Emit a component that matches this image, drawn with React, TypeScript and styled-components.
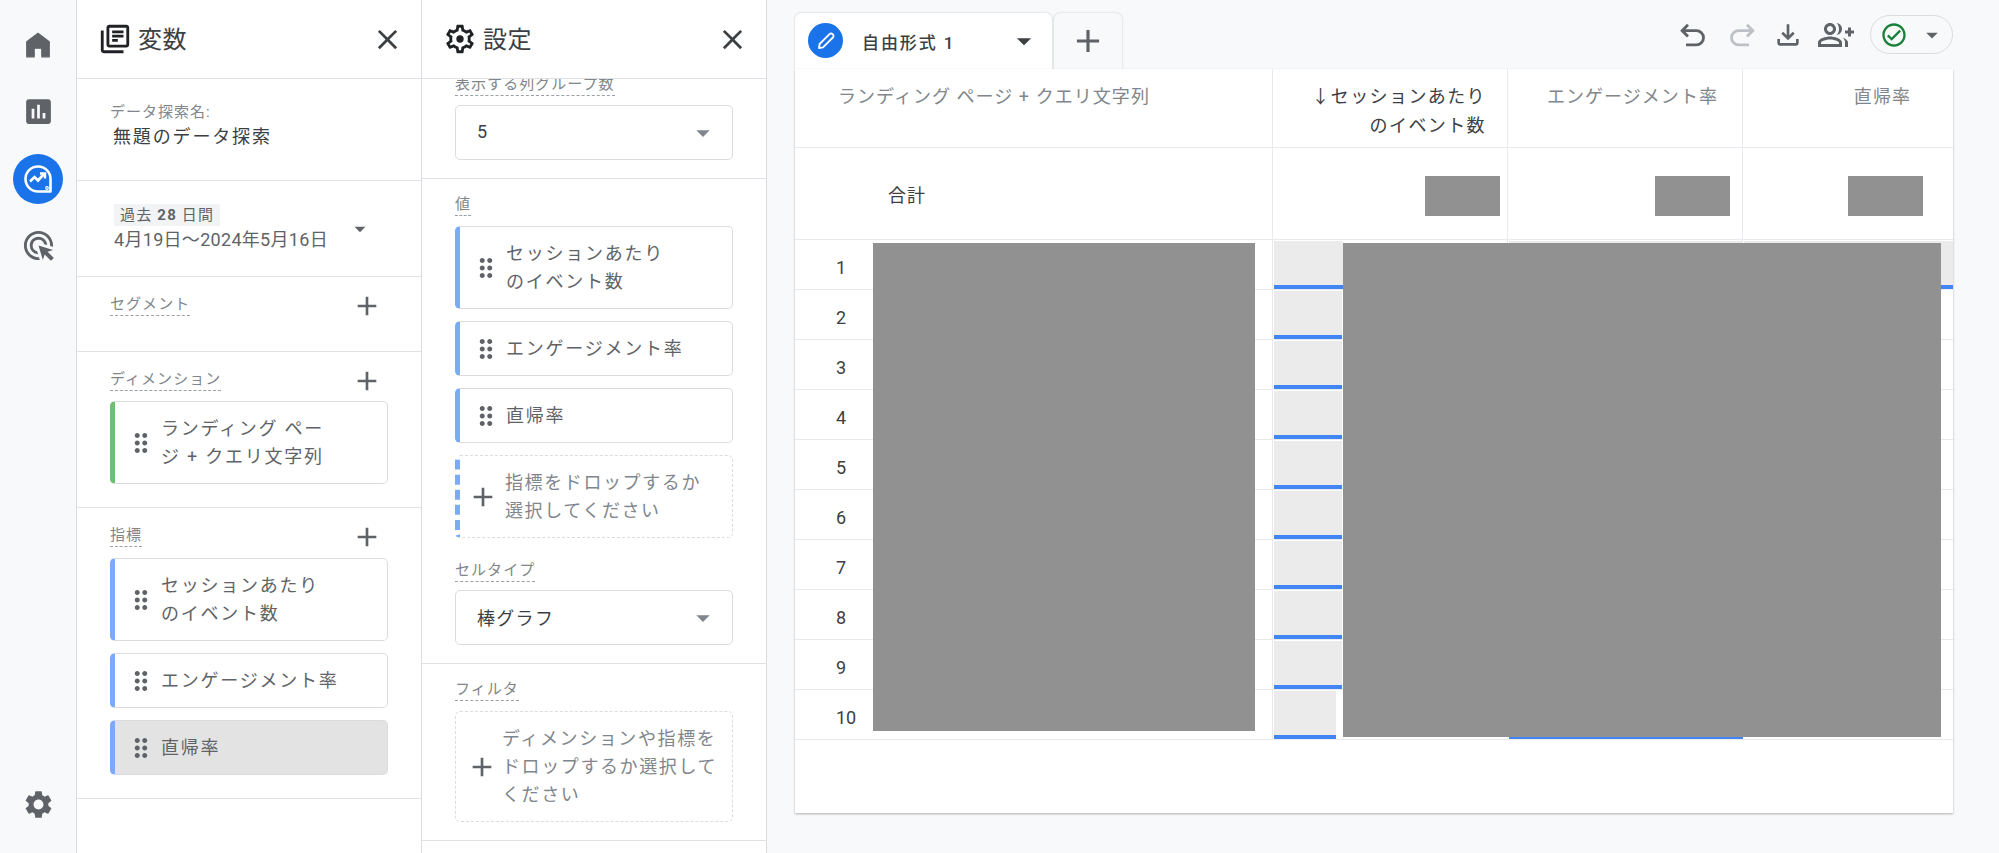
import styled, { createGlobalStyle } from 'styled-components';
import type { ReactNode } from 'react';
import {
  MdAdd,
  MdArrowDropDown,
  MdAssessment,
  MdClose,
  MdDragIndicator,
  MdOutlineAdsClick,
  MdOutlineCheckCircle,
  MdOutlineFileDownload,
  MdOutlineGroupAdd,
  MdOutlineLibraryBooks,
  MdSettings,
} from 'react-icons/md';

const GlobalStyle = createGlobalStyle`
  html, body {
    margin: 0;
    height: 100%;
    background: #f8f9fa;
    overflow: hidden;
  }
  body {
    font-family: Roboto, "Noto Sans CJK JP", sans-serif;
    color: #5f6368;
  }
`;

const GEAR_OUTLINE =
  'M19.43 12.98c.04-.32.07-.64.07-.98 0-.34-.03-.66-.07-.98l2.11-1.65c.19-.15.24-.42.12-.64l-2-3.46c-.09-.16-.26-.25-.44-.25-.06 0-.12.01-.17.03l-2.49 1c-.52-.4-1.08-.73-1.69-.98l-.38-2.65C14.46 2.18 14.25 2 14 2h-4c-.25 0-.46.18-.49.42l-.38 2.65c-.61.25-1.17.59-1.69.98l-2.49-1c-.06-.02-.12-.03-.18-.03-.17 0-.34.09-.43.25l-2 3.46c-.13.22-.07.49.12.64l2.11 1.65c-.04.32-.07.65-.07.98 0 .33.03.66.07.98l-2.11 1.65c-.19.15-.24.42-.12.64l2 3.46c.09.16.26.25.44.25.06 0 .12-.01.17-.03l2.49-1c.52.4 1.08.73 1.69.98l.38 2.65c.03.24.24.42.49.42h4c.25 0 .46-.18.49-.42l.38-2.65c.61-.25 1.17-.59 1.69-.98l2.49 1c.06.02.12.03.18.03.17 0 .34-.09.43-.25l2-3.46c.12-.22.07-.49-.12-.64l-2.11-1.65zm-1.98-1.71c.04.31.05.52.05.73 0 .21-.02.43-.05.73l-.14 1.13.89.7 1.08.84-.7 1.21-1.27-.51-1.04-.42-.9.68c-.43.32-.84.56-1.25.73l-1.06.43-.16 1.13-.2 1.35h-1.4l-.19-1.35-.16-1.13-1.06-.43c-.43-.18-.83-.41-1.23-.71l-.91-.7-1.06.43-1.27.51-.7-1.21 1.08-.84.89-.7-.14-1.13c-.03-.31-.05-.54-.05-.74s.02-.43.05-.73l.14-1.13-.89-.7-1.08-.84.7-1.21 1.27.51 1.04.42.9-.68c.43-.32.84-.56 1.25-.73l1.06-.43.16-1.13.2-1.35h1.39l.19 1.35.16 1.13 1.06.43c.43.18.83.41 1.23.71l.91.7 1.06-.43 1.27-.51.7 1.21-1.07.85-.89.7.14 1.13z';

const HomeIcon = () => (
  <svg width="26" height="28" viewBox="0 0 24 26" fill="#5f6368">
    <path d="M12 2 L22.5 10 V24 H15.5 V16 H8.5 V24 H1.5 V10 Z" stroke="#5f6368" strokeWidth="1" strokeLinejoin="round" />
  </svg>
);

const ExploreIcon = () => (
  <svg width="32" height="32" viewBox="0 0 32 32" fill="none" stroke="#fff">
    <path d="M28.5 16 A12.5 12.5 0 1 0 16 28.5 H28.5 Z" strokeWidth="2.6" strokeLinejoin="round" />
    <path d="M8 18.5 L12.5 14 L16 17.5 L22 11" strokeWidth="2.6" />
    <path d="M18 10.5 H23 V15.5" strokeWidth="2.4" />
    <circle cx="25" cy="25" r="1.3" fill="#1a73e8" strokeWidth="1.2" />
  </svg>
);

const OutlineGear = () => (
  <svg width="34" height="34" viewBox="0 0 24 24" fill="#202124">
    <path d={GEAR_OUTLINE} />
    <circle cx="12" cy="12" r="2.6" />
  </svg>
);

const PencilIcon = () => (
  <svg width="24" height="24" viewBox="0 0 24 24" fill="none" stroke="#fff" strokeWidth="1.8" strokeLinejoin="round">
    <path d="M5 19 L5.6 15 L15.5 5.1 a2.1 2.1 0 0 1 3 0 l.4.4 a2.1 2.1 0 0 1 0 3 L9 18.4 Z" />
  </svg>
);

const UndoIcon = () => (
  <svg width="31" height="31" viewBox="0 0 24 24" fill="none" stroke="currentColor" strokeWidth="2.2">
    <path d="M7 20 H15 a5.5 5.5 0 0 0 0-11 H4" />
    <path d="M8.5 4.5 L4 9 L8.5 13.5" />
  </svg>
);

const RedoIcon = () => (
  <svg width="31" height="31" viewBox="0 0 24 24" fill="none" stroke="currentColor" strokeWidth="2.2">
    <path d="M17 20 H9 a5.5 5.5 0 0 1 0-11 H20" />
    <path d="M15.5 4.5 L20 9 L15.5 13.5" />
  </svg>
);

/* ---------- left rail ---------- */

const Shell = styled.div`
  display: flex;
  height: 853px;
  width: 1999px;
`;

const Rail = styled.nav`
  width: 76px;
  flex: none;
  display: flex;
  flex-direction: column;
  padding: 11px 0 15px;
  box-sizing: content-box;
  height: 827px;
  border-right: 1px solid #dadce0;
  background: #f8f9fa;
  color: #5f6368;
`;

const RailItem = styled.div<{ $bottom?: boolean }>`
  height: 67px;
  display: flex;
  align-items: center;
  justify-content: center;
  margin-top: ${(p) => (p.$bottom ? 'auto' : '0')};
`;

const ActiveDisc = styled.div`
  width: 50px;
  height: 50px;
  border-radius: 50%;
  background: #1a73e8;
  display: flex;
  align-items: center;
  justify-content: center;
`;

/* ---------- variable and settings panels ---------- */

const Panel = styled.aside`
  width: 344px;
  flex: none;
  background: #fff;
  border-right: 1px solid #dadce0;
  display: flex;
  flex-direction: column;
  height: 853px;
`;

const PanelHeader = styled.header`
  height: 78px;
  flex: none;
  display: flex;
  align-items: center;
  gap: 6px;
  padding: 0 17px 0 21px;
  border-bottom: 1px solid #dfe1e4;
  color: #202124;
`;

const PanelTitle = styled.h2`
  margin: 0;
  padding-bottom: 4px;
  flex: 1;
  font-size: 24px;
  font-weight: 400;
  letter-spacing: 0.5px;
  color: #3c4043;
`;

const PanelBody = styled.div`
  flex: 1;
  overflow: hidden;
`;

const Section = styled.section<{ $top?: number; $bottom?: number; $shift?: number }>`
  padding: ${(p) => p.$top ?? 18}px 33px ${(p) => p.$bottom ?? 23}px;
  margin-top: ${(p) => p.$shift ?? 0}px;
  border-bottom: 1px solid #dfe1e4;
`;

const SectionHead = styled.div`
  display: flex;
  align-items: center;
  justify-content: space-between;
  height: 21px;
  color: #5f6368;
`;

const DashedLabel = styled.span`
  display: inline-block;
  font-size: 15px;
  line-height: 18px;
  padding-bottom: 2px;
  letter-spacing: 1.05px;
  color: #80868b;
  border-bottom: 1px dashed #9aa0a6;
`;

const AddIcon = styled(MdAdd)`
  margin: -6px 5px -6px 0;
  color: #5f6368;
`;

const NameLabel = styled.div`
  font-size: 15px;
  line-height: 22px;
  letter-spacing: 1px;
  color: #80868b;
`;

const NameValue = styled.div`
  font-size: 18px;
  line-height: 28px;
  letter-spacing: 1.85px;
  margin-left: 3px;
  color: #3c4043;
`;

const DateBlock = styled.div`
  display: flex;
  align-items: center;
  justify-content: space-between;
  padding-left: 4px;
`;

const DateBadge = styled.span`
  display: inline-block;
  background: #f1f3f4;
  padding: 0 6px;
  font-size: 15px;
  line-height: 22px;
  letter-spacing: 1.2px;
  color: #5f6368;
  b {
    font-weight: 700;
  }
`;

const DateText = styled.div`
  margin-top: 1px;
  font-size: 18px;
  line-height: 26px;
  letter-spacing: 0.3px;
  color: #5f6368;
`;

const DateCaret = styled(MdArrowDropDown)`
  margin-right: 15px;
  color: #5f6368;
`;

const ChipList = styled.div<{ $gap?: number }>`
  display: flex;
  flex-direction: column;
  gap: 12px;
  margin-top: ${(p) => p.$gap ?? 10}px;
`;

const Chip = styled.div<{ $accent: string; $active?: boolean }>`
  display: flex;
  align-items: center;
  gap: 5px;
  padding: 12.5px 8px 12.5px 11px;
  border: 1px solid #dadce0;
  border-left: 5px solid ${(p) => p.$accent};
  border-radius: 5px;
  background: ${(p) => (p.$active ? '#e3e3e3' : '#fff')};
  font-size: 18px;
  line-height: 28px;
  letter-spacing: 1.75px;
  color: #5f6368;
  svg {
    flex: none;
    margin: -1px 0;
    color: #5f6368;
  }
`;

const DropZone = styled.div<{ $accent?: boolean; $plusLeft: number; $gap: number }>`
  display: flex;
  align-items: center;
  gap: ${(p) => p.$gap}px;
  padding: 12.5px 8px 12.5px ${(p) => p.$plusLeft}px;
  border: 1px dashed #dadce0;
  border-left: ${(p) => (p.$accent ? '5px dashed #7baaf7' : '1px dashed #dadce0')};
  border-radius: 5px;
  font-size: 18px;
  line-height: 28px;
  letter-spacing: 1.6px;
  color: #80868b;
  svg {
    flex: none;
    color: #5f6368;
  }
`;

const SelectBox = styled.div<{ $gap?: number }>`
  display: flex;
  align-items: center;
  justify-content: space-between;
  height: 55px;
  box-sizing: border-box;
  margin-top: ${(p) => p.$gap ?? 9}px;
  padding: 0 13px 2px 21px;
  border: 1px solid #dadce0;
  border-radius: 5px;
  font-size: 18px;
  letter-spacing: 1.3px;
  color: #3c4043;
  svg {
    color: #80868b;
    margin-bottom: -2px;
  }
`;

const SubLabelRow = styled.div`
  margin-top: 23px;
`;

/* ---------- main area ---------- */

const Main = styled.main`
  flex: 1;
  min-width: 0;
  padding: 0 46px 0 28px;
  background: #f8f9fa;
`;

const TopBar = styled.div`
  height: 69px;
  display: flex;
  align-items: flex-end;
`;

const TabCard = styled.div`
  width: 257px;
  height: 56px;
  box-sizing: border-box;
  display: flex;
  align-items: center;
  padding: 0 11px 0 13px;
  border-radius: 6px 6px 0 0;
  background: #fff;
  box-shadow: 0 0 2px rgba(60, 64, 67, 0.3);
  color: #3c4043;
`;

const PencilDisc = styled.div`
  width: 35px;
  height: 35px;
  flex: none;
  border-radius: 50%;
  background: #1a73e8;
  display: flex;
  align-items: center;
  justify-content: center;
  margin-top: -1px;
`;

const TabTitle = styled.div`
  flex: 1;
  margin-left: 19px;
  font-size: 17px;
  font-weight: 500;
  letter-spacing: 1.9px;
`;

const AddTab = styled.div`
  width: 68px;
  height: 56px;
  margin-left: 2px;
  display: flex;
  align-items: center;
  justify-content: center;
  border-radius: 6px 6px 0 0;
  background: #f8f9fa;
  box-shadow: 0 0 2px rgba(60, 64, 67, 0.3);
  color: #5f6368;
`;

const Tools = styled.div`
  margin-left: auto;
  align-self: flex-start;
  height: 39px;
  margin-top: 15px;
  display: flex;
  align-items: center;
  color: #5f6368;
`;

const ToolButton = styled.div<{ $off?: boolean; $width: number }>`
  width: ${(p) => p.$width}px;
  display: flex;
  justify-content: center;
  color: ${(p) => (p.$off ? '#bdc1c6' : '#5f6368')};
`;

const StatusPill = styled.div`
  width: 83px;
  height: 39px;
  box-sizing: border-box;
  margin-left: 9px;
  display: flex;
  align-items: center;
  justify-content: space-between;
  padding: 0 6px 0 9px;
  border: 1px solid #dadce0;
  border-radius: 20px;
  svg:first-child {
    color: #188038;
  }
`;

/* ---------- table ---------- */

const TableCard = styled.div`
  position: relative;
  height: 744px;
  background: #fff;
  box-shadow: 0 1px 2px rgba(60, 64, 67, 0.4);
`;

const Grid = styled.div`
  display: grid;
  grid-template-columns: 478px 235px 235px 210px;
`;

const Cell = styled.div<{ $last?: boolean }>`
  box-sizing: border-box;
  min-width: 0;
  border-bottom: 1px solid #e8eaed;
  border-right: ${(p) => (p.$last ? 'none' : '1px solid #e8eaed')};
`;

const HeaderCell = styled(Cell)<{ $right?: boolean; $inset?: number }>`
  height: 79px;
  padding: 13px ${(p) => p.$inset ?? 0}px 0 ${(p) => (p.$right ? 0 : 43)}px;
  text-align: ${(p) => (p.$right ? 'right' : 'left')};
  font-size: 18px;
  line-height: 29px;
  letter-spacing: 1.05px;
  color: #80868b;
`;

const SortedHead = styled.span`
  letter-spacing: 1.4px;
  color: #3c4043;
`;

const TotalCell = styled(Cell)<{ $inset?: number }>`
  height: 92px;
  display: flex;
  align-items: center;
  justify-content: flex-end;
  padding: 4px ${(p) => p.$inset ?? 0}px 0 0;
`;

const TotalLabel = styled(TotalCell)`
  justify-content: flex-start;
  padding: 0 0 0 93px;
  font-size: 18px;
  letter-spacing: 1.05px;
  color: #3c4043;
`;

const Redacted = styled.div`
  width: 75px;
  height: 40px;
  background: #919191;
`;

const RankCell = styled(Cell)`
  height: 50px;
  padding: 13px 0 0 41px;
  font-size: 18px;
  line-height: 30px;
  color: #3c4043;
`;

const BarCell = styled(Cell)`
  height: 50px;
  padding: 1px 0 0 1px;
`;

const Bar = styled.div`
  height: 100%;
  box-sizing: border-box;
  background: #ebebeb;
  border-bottom: 4px solid #4285f4;
`;

const Mask = styled.div<{ $left: number; $width: number; $height: number }>`
  position: absolute;
  top: 174px;
  left: ${(p) => p.$left}px;
  width: ${(p) => p.$width}px;
  height: ${(p) => p.$height}px;
  background: #919191;
`;

const metrics: { lines: ReactNode }[] = [
  { lines: <>セッションあたり<br />のイベント数</> },
  { lines: 'エンゲージメント率' },
  { lines: '直帰率' },
];

const BLUE = '#7baaf7';
const GREEN = '#6cbf73';

// widths of the bars in px, per row, for the three value columns
const rows = [
  [69, 234, 209],
  [68, 234, 0],
  [68, 234, 0],
  [68, 234, 0],
  [68, 234, 0],
  [68, 234, 0],
  [68, 234, 0],
  [68, 234, 0],
  [68, 234, 0],
  [62, 234, 0],
];

function Head({ icon, title }: { icon: ReactNode; title: string }) {
  return (
    <PanelHeader>
      {icon}
      <PanelTitle>{title}</PanelTitle>
      <MdClose size={33} color="#3c4043" />
    </PanelHeader>
  );
}

function MetricChips({ highlight, gap }: { highlight?: number; gap?: number }) {
  return (
    <ChipList $gap={gap}>
      {metrics.map((m, i) => (
        <Chip key={i} $accent={BLUE} $active={highlight === i}>
          <MdDragIndicator size={30} />
          <div>{m.lines}</div>
        </Chip>
      ))}
    </ChipList>
  );
}

function Row({ rank, widths }: { rank: number; widths: number[] }) {
  return (
    <>
      <RankCell>{rank}</RankCell>
      {widths.map((w, i) => (
        <BarCell key={i} $last={i === 2}>
          {w > 0 && <Bar style={{ width: w }} />}
        </BarCell>
      ))}
    </>
  );
}

export default function App() {
  return (
    <>
      <GlobalStyle />
      <Shell>
        <Rail>
          <RailItem><HomeIcon /></RailItem>
          <RailItem><MdAssessment size={33} /></RailItem>
          <RailItem><ActiveDisc><ExploreIcon /></ActiveDisc></RailItem>
          <RailItem><MdOutlineAdsClick size={35} /></RailItem>
          <RailItem $bottom><MdSettings size={33} /></RailItem>
        </Rail>

        <Panel>
          <Head icon={<MdOutlineLibraryBooks size={34} />} title="変数" />
          <PanelBody>
            <Section $top={22} $bottom={29}>
              <NameLabel>データ探索名:</NameLabel>
              <NameValue>無題のデータ探索</NameValue>
            </Section>
            <Section $top={23} $bottom={23}>
              <DateBlock>
                <div>
                  <DateBadge>過去 <b>28</b> 日間</DateBadge>
                  <DateText>4月19日〜2024年5月16日</DateText>
                </div>
                <DateCaret size={26} />
              </DateBlock>
            </Section>
            <Section $bottom={35}>
              <SectionHead>
                <DashedLabel>セグメント</DashedLabel>
                <AddIcon size={32} />
              </SectionHead>
            </Section>
            <Section>
              <SectionHead>
                <DashedLabel>ディメンション</DashedLabel>
                <AddIcon size={32} />
              </SectionHead>
              <ChipList>
                <Chip $accent={GREEN}>
                  <MdDragIndicator size={30} />
                  <div>ランディング ペー<br />ジ + クエリ文字列</div>
                </Chip>
              </ChipList>
            </Section>
            <Section>
              <SectionHead>
                <DashedLabel>指標</DashedLabel>
                <AddIcon size={32} />
              </SectionHead>
              <MetricChips highlight={2} gap={11} />
            </Section>
          </PanelBody>
        </Panel>

        <Panel>
          <Head icon={<OutlineGear />} title="設定" />
          <PanelBody>
            <Section $top={0} $bottom={18} $shift={-4}>
              <SectionHead>
                <DashedLabel>表示する列グループ数</DashedLabel>
              </SectionHead>
              <SelectBox>
                5
                <MdArrowDropDown size={32} />
              </SelectBox>
            </Section>
            <Section $top={16} $bottom={18}>
              <SectionHead>
                <DashedLabel>値</DashedLabel>
              </SectionHead>
              <MetricChips />
              <ChipList $gap={12}>
                <DropZone $accent $plusLeft={7} $gap={6}>
                  <MdAdd size={32} />
                  <div>指標をドロップするか<br />選択してください</div>
                </DropZone>
              </ChipList>
              <SubLabelRow>
                <SectionHead>
                  <DashedLabel>セルタイプ</DashedLabel>
                </SectionHead>
              </SubLabelRow>
              <SelectBox $gap={8}>
                棒グラフ
                <MdArrowDropDown size={32} />
              </SelectBox>
            </Section>
            <Section $top={16} $bottom={18}>
              <SectionHead>
                <DashedLabel>フィルタ</DashedLabel>
              </SectionHead>
              <ChipList>
                <DropZone $plusLeft={10} $gap={4}>
                  <MdAdd size={32} />
                  <div>ディメンションや指標を<br />ドロップするか選択して<br />ください</div>
                </DropZone>
              </ChipList>
            </Section>
          </PanelBody>
        </Panel>

        <Main>
          <TopBar>
            <TabCard>
              <PencilDisc><PencilIcon /></PencilDisc>
              <TabTitle>自由形式 1</TabTitle>
              <MdArrowDropDown size={34} color="#3c4043" />
            </TabCard>
            <AddTab><MdAdd size={38} /></AddTab>
            <Tools>
              <ToolButton $width={54}><UndoIcon /></ToolButton>
              <ToolButton $width={46} $off><RedoIcon /></ToolButton>
              <ToolButton $width={46}><MdOutlineFileDownload size={32} /></ToolButton>
              <ToolButton $width={50}><MdOutlineGroupAdd size={36} /></ToolButton>
              <StatusPill>
                <MdOutlineCheckCircle size={28} />
                <MdArrowDropDown size={28} />
              </StatusPill>
            </Tools>
          </TopBar>

          <TableCard>
            <Grid>
              <HeaderCell>ランディング ページ + クエリ文字列</HeaderCell>
              <HeaderCell $right $inset={21}>
                <SortedHead>↓セッションあたり<br />のイベント数</SortedHead>
              </HeaderCell>
              <HeaderCell $right $inset={24}>エンゲージメント率</HeaderCell>
              <HeaderCell $right $last $inset={42}>直帰率</HeaderCell>

              <TotalLabel>合計</TotalLabel>
              <TotalCell $inset={7}><Redacted /></TotalCell>
              <TotalCell $inset={12}><Redacted /></TotalCell>
              <TotalCell $last $inset={30}><Redacted /></TotalCell>

              {rows.map((widths, i) => (
                <Row key={i} rank={i + 1} widths={widths} />
              ))}
            </Grid>
            <Mask $left={78} $width={382} $height={488} />
            <Mask $left={548} $width={598} $height={494} />
          </TableCard>
        </Main>
      </Shell>
    </>
  );
}
